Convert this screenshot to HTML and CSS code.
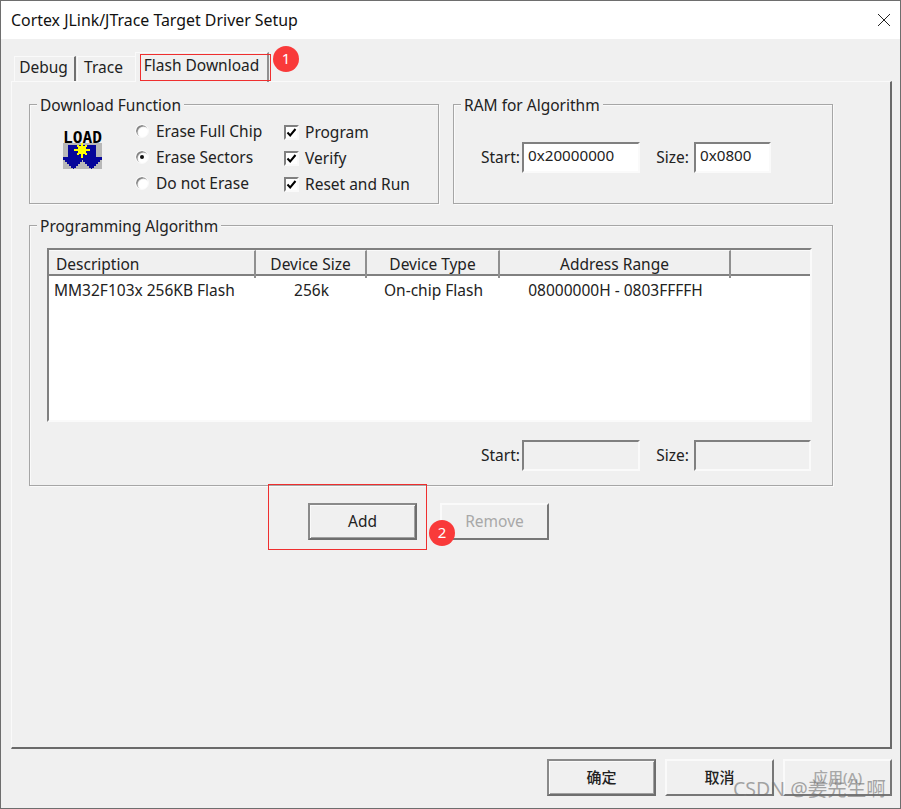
FILE: index.html
```html
<!DOCTYPE html>
<html lang="zh">
<head>
<meta charset="utf-8">
<title>Cortex JLink/JTrace Target Driver Setup</title>
<link rel="stylesheet" href="styles.css">
</head>
<body>
<div class="window">
  <header class="titlebar">
    <span class="title">Cortex JLink/JTrace Target Driver Setup</span>
    <svg class="close" width="14" height="14" viewBox="0 0 14 14"><path d="M1 1L13 13M13 1L1 13" stroke="#222" stroke-width="1" fill="none"/></svg>
  </header>
  <div class="content">
    <nav class="tabs">
      <div class="tab tab-debug">Debug</div>
      <div class="tab tab-trace">Trace</div>
      <div class="tab tab-active">Flash Download</div>
    </nav>
    <section class="panel">
      <div class="top-row">
        <div class="group group-download">
          <div class="legend">Download Function</div>
          <svg class="load-icon" width="39" height="39" viewBox="0 0 39 39" shape-rendering="crispEdges">
            <rect x="0" y="13" width="39" height="26" fill="#b8b8b8"/>
            <text x="0" y="12.500" class="load-text" textLength="39" lengthAdjust="spacingAndGlyphs">LOAD</text>
            <path d="M5 15H33V27H39V30H37V32H35V34H33V36H31V38H29V39H28V38H26V36H24V34H22V32H20V30H19V32H17V34H15V36H13V38H11V39H10V38H8V36H6V34H4V32H2V30H0V27H5Z" fill="#06069a"/>
            <path d="M18 13H20V16H22V15H24V17H23V19H27V21H23V23H24V25H22V24H20V28H18V24H16V25H14V23H15V21H11V19H15V17H14V15H16V16H18Z" fill="#ffff00"/>
          </svg>
          <div class="options radios">
            <label class="option"><span class="radio"></span>Erase Full Chip</label>
            <label class="option"><span class="radio radio-on"></span>Erase Sectors</label>
            <label class="option"><span class="radio"></span>Do not Erase</label>
          </div>
          <div class="options checks">
            <label class="option"><span class="check"><svg width="11" height="11" viewBox="0 0 11 11"><path d="M1.500 5.500L4.200 8.500L9.500 2" stroke="#000" stroke-width="2" fill="none"/></svg></span>Program</label>
            <label class="option"><span class="check"><svg width="11" height="11" viewBox="0 0 11 11"><path d="M1.500 5.500L4.200 8.500L9.500 2" stroke="#000" stroke-width="2" fill="none"/></svg></span>Verify</label>
            <label class="option"><span class="check"><svg width="11" height="11" viewBox="0 0 11 11"><path d="M1.500 5.500L4.200 8.500L9.500 2" stroke="#000" stroke-width="2" fill="none"/></svg></span>Reset and Run</label>
          </div>
        </div>
        <div class="group group-ram">
          <div class="legend">RAM for Algorithm</div>
          <div class="fields">
            <span class="field-label">Start:</span>
            <span class="input input-start">0x20000000</span>
            <span class="field-label size-label">Size:</span>
            <span class="input input-size">0x0800</span>
          </div>
        </div>
      </div>
      <div class="group group-algo">
        <div class="legend">Programming Algorithm</div>
        <div class="list">
          <div class="list-head">
            <div class="col col-desc">Description</div>
            <div class="col col-center">Device Size</div>
            <div class="col col-center">Device Type</div>
            <div class="col col-center">Address Range</div>
            <div class="col col-last"></div>
          </div>
          <div class="list-row">
            <div class="cell cell-desc">MM32F103x 256KB Flash</div>
            <div class="cell cell-center">256k</div>
            <div class="cell cell-center">On-chip Flash</div>
            <div class="cell cell-center">08000000H - 0803FFFFH</div>
            <div class="cell"></div>
          </div>
        </div>
        <div class="fields fields-lower">
          <span class="field-label">Start:</span>
          <span class="input input-start input-off"></span>
          <span class="field-label size-label">Size:</span>
          <span class="input input-size-wide input-off"></span>
        </div>
      </div>
      <div class="actions">
        <button class="btn btn-default btn-text">Add</button>
        <button class="btn btn-disabled btn-text">Remove</button>
      </div>
    </section>
    <footer class="footer">
      <button class="btn btn-default btn-cjk">确定</button>
      <button class="btn btn-cjk">取消</button>
      <button class="btn btn-disabled btn-cjk">应用(A)</button>
    </footer>
  </div>
  <div class="mark mark-tab"></div>
  <div class="badge badge-1">1</div>
  <div class="mark mark-add"></div>
  <div class="badge badge-2">2</div>
  <div class="watermark">CSDN @姜先生啊</div>
</div>
</body>
</html>
```
FILE: styles.css
```css
* { box-sizing: border-box; }
html, body { margin: 0; padding: 0; }
body {
  width: 901px;
  height: 809px;
  overflow: hidden;
  font-family: "Noto Sans", "Noto Sans CJK SC", sans-serif;
  font-size: 15.5px;
  line-height: 20px;
  color: #222;
  background: #f0f0f0;
}
.window {
  position: relative;
  width: 901px;
  height: 809px;
  border: 1px solid #6e6e6e;
  display: flex;
  flex-direction: column;
  background: #f0f0f0;
}
.titlebar {
  height: 38px;
  flex: none;
  background: #fff;
  display: flex;
  align-items: center;
  justify-content: space-between;
  padding: 0 8px 0 10px;
}
.title { font-size: 15.9px; color: #111; }
.close { margin-right: 1px; }
.content {
  flex: 1;
  display: flex;
  flex-direction: column;
  padding: 0 8px 0 10px;
}
.tabs {
  height: 42px;
  flex: none;
  display: flex;
  align-items: flex-end;
  padding-left: 3px;
}
.tab {
  height: 25px;
  line-height: 20px;
  text-align: center;
  background: #f0f0f0;
  border-top: 1px solid #fafafa;
  border-left: 1px solid #fafafa;
}
.tab-debug { width: 62px; padding-right: 2px; border-right: 2px solid #707070; }
.tab-trace { width: 58px; margin-left: 1px; padding-right: 6px; }
.tab-active {
  width: 134px;
  height: 30px;
  padding-top: 2px;
  margin-bottom: -1px;
  position: relative;
  border-right: 2px solid #909090;
}
.panel {
  height: 668px;
  flex: none;
  border: 1px solid #fafafa;
  border-right: 2px solid #6a6a6a;
  border-bottom: 2px solid #6a6a6a;
  padding: 22px 0 0 17px;
}
.top-row { display: flex; gap: 14px; }
.group {
  position: relative;
  border: 1px solid #a6a6a6;
  box-shadow: 1px 1px 0 #fafafa, inset 1px 1px 0 #fafafa;
}
.legend {
  position: absolute;
  top: -10px;
  left: 7px;
  padding: 0 3px;
  background: #f0f0f0;
}
.group-download {
  width: 410px;
  height: 100px;
  display: flex;
  padding: 13px 0 0 33px;
}
.load-icon { flex: none; margin: 12px 0 0 0; }
.load-text {
  font-family: "DejaVu Sans Mono", monospace;
  font-weight: 700;
  font-size: 15.500px;
  fill: #000;
}
.options { display: flex; flex-direction: column; }
.option { display: flex; align-items: center; height: 26px; }
.radios { margin: 0 0 0 33px; width: 149px; }
.radio {
  width: 14px;
  height: 14px;
  margin: 0 7px 0 0;
  border-radius: 50%;
  background: #fff;
  border: 1px solid #fafafa;
  box-shadow: inset 1.500px 1.500px 1px #808080;
  flex: none;
  position: relative;
}
.radio-on::after {
  content: "";
  position: absolute;
  left: 4px;
  top: 4px;
  width: 4px;
  height: 4px;
  border-radius: 50%;
  background: #111;
}
.checks { margin-top: 1px; }
.check {
  width: 15px;
  height: 15px;
  margin-right: 6px;
  flex: none;
  background: #fff;
  border: 2px solid #fafafa;
  border-top-color: #808080;
  border-left-color: #808080;
  display: flex;
  align-items: center;
  justify-content: center;
}
.group-ram { width: 380px; height: 100px; }
.fields {
  display: flex;
  align-items: center;
  padding: 37px 0 0 27px;
}
.field-label {
  width: 38px;
  margin: 0 3px 2px 0;
  text-align: right;
  white-space: nowrap;
  flex: none;
}
.size-label { width: 33px; margin: 0 5px 2px 16px; }
.input {
  height: 31px;
  padding: 1px 0 0 4px;
  font-size: 15.2px;
  background: #fff;
  border: 2px solid #fafafa;
  border-top-color: #808080;
  border-left-color: #808080;
  flex: none;
}
.input-start { width: 118px; }
.input-size { width: 77px; }
.input-size-wide { width: 117px; }
.input-off { background: #f0f0f0; }
.group-algo {
  width: 804px;
  height: 261px;
  margin-top: 21px;
  padding: 22px 0 0 17px;
}
.list {
  width: 765px;
  height: 174px;
  background: #fff;
  border: 2px solid #fafafa;
  border-top-color: #808080;
  border-left-color: #808080;
}
.list-head, .list-row {
  display: grid;
  grid-template-columns: 207px 111px 133px 231px 1fr;
}
.list-head {
  height: 26px;
  background: #f0f0f0;
  border-bottom: 2px solid #808080;
}
.col {
  border-right: 2px solid #909090;
  border-top: 1px solid #fafafa;
  line-height: 27px;
}
.col-desc { padding-left: 7px; }
.col-center { text-align: center; white-space: nowrap; }
.col-last { border-right: 0; }
.list-row { height: 30px; padding-top: 4px; }
.cell-desc { padding-left: 5px; white-space: nowrap; }
.cell-center { text-align: center; white-space: nowrap; }
.fields-lower { padding: 18px 0 0 434px; }
.actions {
  display: flex;
  gap: 23px;
  margin: 17px 0 0 279px;
}
.btn {
  width: 109px;
  height: 37px;
  padding: 0;
  font: inherit;
  color: #222;
  background: #f0f0f0;
  border: 2px solid #fafafa;
  border-right-color: #777;
  border-bottom-color: #777;
}
.btn-text { padding-bottom: 2px; }
.btn-default {
  border: 2px solid #6e6e6e;
  border-top-color: #8a8a8a;
  border-left-color: #8a8a8a;
  box-shadow: inset 1px 1px 0 #fafafa, inset -1px -1px 0 #a0a0a0;
}
.btn-disabled { color: #a8a8a8; }
.btn-cjk { font-size: 15px; font-weight: 500; padding-bottom: 2px; }
.footer {
  display: flex;
  justify-content: flex-end;
  gap: 9px;
  margin-top: 10px;
  height: 37px;
}
.mark { position: absolute; border: 1px solid #ef2f2f; }
.mark-tab { left: 139px; top: 53px; width: 131px; height: 27px; }
.mark-add { left: 267px; top: 483px; width: 159px; height: 66px; }
.badge {
  position: absolute;
  width: 26px;
  height: 26px;
  border-radius: 50%;
  background: #f93a3a;
  color: #fff;
  font-size: 15px;
  line-height: 25px;
  text-align: center;
}
.badge-1 { left: 272px; top: 45px; }
.badge-2 { left: 428px; top: 519px; }
.watermark {
  position: absolute;
  left: 732px;
  top: 775px;
  font-size: 19.500px;
  line-height: 26px;
  color: rgba(110, 110, 110, 0.6);
  white-space: nowrap;
}
```
